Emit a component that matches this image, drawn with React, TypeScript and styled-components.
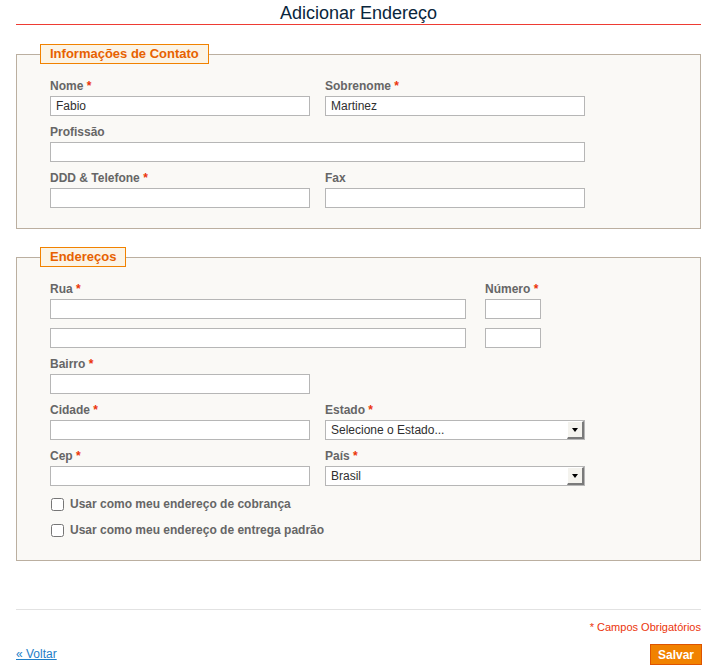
import styled, {createGlobalStyle} from "styled-components"
import {FC, ReactNode} from "react"

const GlobalStyle = createGlobalStyle`
  html, body {
    margin: 0;
    padding: 0;
    background: #fff;
  }
  body {
    font-family: "Liberation Sans", Arial, sans-serif;
    font-size: 12px;
    color: #2f2f2f;
  }
`

const App: FC = () => {
  return <Page>
    <GlobalStyle />
    <TitleBar>
      <Title>Adicionar Endereço</Title>
    </TitleBar>

    <Box>
      <Legend>Informações de Contato</Legend>
      <BoxBody>
        <Row>
          <Field label="Nome" required><TextInput width={260} defaultValue="Fabio" /></Field>
          <Field label="Sobrenome" required><TextInput width={260} defaultValue="Martinez" /></Field>
        </Row>
        <Row>
          <Field label="Profissão"><TextInput width={535} /></Field>
        </Row>
        <Row>
          <Field label="DDD & Telefone" required><TextInput width={260} /></Field>
          <Field label="Fax"><TextInput width={260} /></Field>
        </Row>
      </BoxBody>
    </Box>

    <Box>
      <Legend>Endereços</Legend>
      <BoxBody>
        <Row $gap={19}>
          <Field label="Rua" required><TextInput width={416} /></Field>
          <Field label="Número" required><TextInput width={56} /></Field>
        </Row>
        <Row $gap={19}>
          <TextInput width={416} />
          <TextInput width={56} />
        </Row>
        <Row>
          <Field label="Bairro" required><TextInput width={260} /></Field>
        </Row>
        <Row>
          <Field label="Cidade" required><TextInput width={260} /></Field>
          <Field label="Estado" required>
            <SelectBox value="Selecione o Estado..." options={["Selecione o Estado...", "São Paulo", "Rio de Janeiro", "Minas Gerais"]} />
          </Field>
        </Row>
        <Row>
          <Field label="Cep" required><TextInput width={260} /></Field>
          <Field label="País" required>
            <SelectBox value="Brasil" options={["Brasil", "Portugal", "Argentina"]} />
          </Field>
        </Row>
        <CheckRow>
          <Check type="checkbox" id="cobranca" />
          <CheckLabel htmlFor="cobranca">Usar como meu endereço de cobrança</CheckLabel>
        </CheckRow>
        <CheckRow>
          <Check type="checkbox" id="entrega" />
          <CheckLabel htmlFor="entrega">Usar como meu endereço de entrega padrão</CheckLabel>
        </CheckRow>
      </BoxBody>
    </Box>

    <Footer>
      <Required>* Campos Obrigatórios</Required>
      <Actions>
        <BackLink href="#">« Voltar</BackLink>
        <SaveButton type="button">Salvar</SaveButton>
      </Actions>
    </Footer>
  </Page>
}

const Field: FC<{label: string, required?: boolean, children: ReactNode}> = ({label, required, children}) => {
  return <FieldCol>
    <Label>{label}{required && <Star> *</Star>}</Label>
    {children}
  </FieldCol>
}

const SelectBox: FC<{value: string, options: string[]}> = ({value, options}) => {
  return <SelectWrap>
    <Select defaultValue={value}>
      {options.map((o) => <option key={o}>{o}</option>)}
    </Select>
    <SelectArrow />
  </SelectWrap>
}

const Page = styled.div`
  width: 685px;
  margin: 0 0 0 16px;
`

const TitleBar = styled.div`
  border-bottom: 1px solid #ee3b33;
  height: 24px;
  text-align: center;
  margin-bottom: 19px;
`

const Title = styled.h1`
  margin: 0;
  padding-top: 2px;
  font-size: 18px;
  font-weight: normal;
  line-height: 22px;
  color: #0a263c;
`

const Box = styled.fieldset`
  margin: 0 0 18px 0;
  padding: 15px 0 11px 23px;
  border: 1px solid #bbafa0;
  background: #faf9f6;
  min-width: 0;
`

const Legend = styled.legend`
  padding: 0 9px;
  margin: 0;
  border: 1px solid #f18200;
  background: #fbf4e6;
  color: #e76200;
  font-weight: bold;
  font-size: 13px;
  line-height: 18px;
`

const BoxBody = styled.div`
  padding-left: 10px;
`

const Row = styled.div<{$gap?: number}>`
  display: flex;
  gap: ${(p) => p.$gap ?? 15}px;
  margin-bottom: 9px;
`

const FieldCol = styled.div`
  display: flex;
  flex-direction: column;
`

const Label = styled.label`
  display: block;
  font-weight: bold;
  font-size: 12px;
  line-height: 15px;
  color: #666;
  margin-bottom: 2px;
`

const Star = styled.span`
  color: #eb340a;
`

const TextInput = styled.input<{width: number}>`
  box-sizing: border-box;
  width: ${(p) => p.width}px;
  height: 20px;
  margin: 0;
  padding: 0 5px;
  border: 1px solid #b6b6b6;
  background: #fff;
  font-family: "Liberation Sans", Arial, sans-serif;
  font-size: 12px;
  color: #2f2f2f;
  outline: none;
`

const SelectWrap = styled.div`
  position: relative;
  width: 260px;
  height: 20px;
`

const Select = styled.select`
  box-sizing: border-box;
  appearance: none;
  width: 260px;
  height: 20px;
  margin: 0;
  padding: 0 0 0 5px;
  border: 1px solid #b6b6b6;
  border-radius: 0;
  background: #fff;
  font-family: "Liberation Sans", Arial, sans-serif;
  font-size: 12px;
  color: #2f2f2f;
  outline: none;
`

const SelectArrow = styled.span`
  position: absolute;
  right: 1px;
  top: 1px;
  box-sizing: border-box;
  width: 17px;
  height: 18px;
  background: #f4f3ee;
  border-left: 1px solid #fff;
  border-top: 1px solid #fff;
  border-right: 2px solid #7a7a7a;
  border-bottom: 2px solid #7a7a7a;
  pointer-events: none;
  &::after {
    content: "";
    position: absolute;
    left: 4px;
    top: 6px;
    border-left: 3.5px solid transparent;
    border-right: 3.5px solid transparent;
    border-top: 4px solid #000;
  }
`

const CheckRow = styled.div`
  display: flex;
  align-items: center;
  height: 16px;
  margin-top: 10px;
  &:last-child {
    margin-bottom: 11px;
  }
`

const Check = styled.input`
  width: 13px;
  height: 13px;
  margin: 0 6px 0 1px;
`

const CheckLabel = styled.label`
  font-weight: bold;
  font-size: 12px;
  color: #666;
`

const Footer = styled.div`
  margin-top: 48px;
  border-top: 1px solid #e2e2e2;
  padding-top: 10px;
`

const Required = styled.div`
  text-align: right;
  font-size: 11px;
  line-height: 14px;
  color: #eb340a;
`

const Actions = styled.div`
  display: flex;
  justify-content: space-between;
  align-items: flex-end;
  margin-top: 10px;
`

const BackLink = styled.a`
  font-size: 12px;
  color: #1e7ec8;
  text-decoration: underline;
  margin-bottom: 4px;
`

const SaveButton = styled.button`
  height: 21px;
  padding: 0 7px;
  margin-right: -1px;
  border: 1px solid #de5400;
  background: #f18200;
  color: #fff;
  font-family: "Liberation Sans", Arial, sans-serif;
  font-weight: bold;
  font-size: 12px;
  cursor: pointer;
`

export default App
